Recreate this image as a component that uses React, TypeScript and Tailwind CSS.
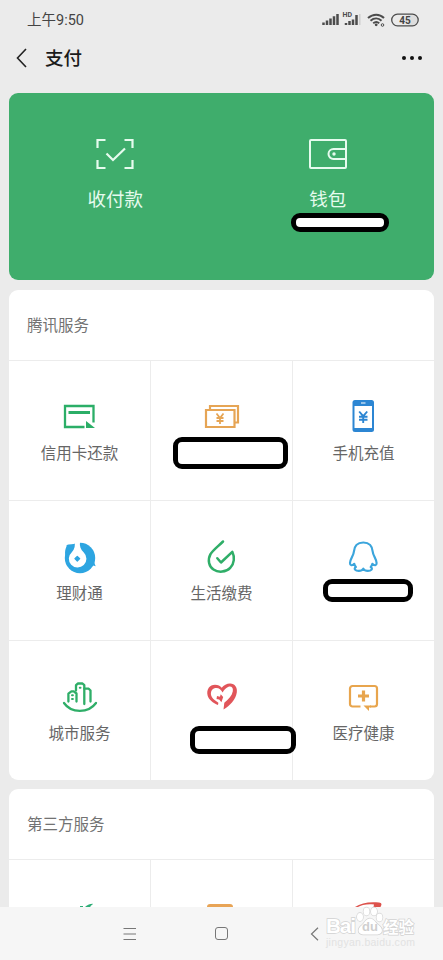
import { ReactNode } from "react"
import { clsx } from "clsx"

interface Service {
  label?: string
  icon: ReactNode
  // position of the marker that covers the hidden label
  mask?: string
}

function CreditCardIcon() {
  return (
    <svg width="41" height="40" viewBox="0 0 41 40" fill="none" stroke="#2bae67" strokeWidth="2.300">
      <path d="M25.500 30H6V9h28.500v16.500" />
      <path d="M9.500 15.500H31" strokeWidth="3" />
      <path d="M27 24l9 7h-9z" fill="#2bae67" stroke="none" />
    </svg>
  )
}

function CashIcon() {
  return (
    <svg width="41" height="40" viewBox="0 0 41 40" fill="none" stroke="#e6a555" strokeWidth="2.200">
      <path d="M9 12.500V9h28v16.500h-3" />
      <path d="M5 13h28.500v17H5z" />
      <path d="M15.500 16.500l3.500 4.500 3.500-4.500M19 20.500v6.500M15.500 21h7M15.500 24h7" strokeWidth="1.800" />
    </svg>
  )
}

function PhoneIcon() {
  return (
    <svg width="41" height="40" viewBox="0 0 41 40" fill="none">
      <rect x="9.500" y="3" width="21.500" height="32" rx="2.500" fill="#2c86d3" />
      <path d="M11.500 9h17.500v22H11.500z" fill="#fff" />
      <path d="M18 6h4.500" stroke="#fff" strokeWidth="1.200" />
      <path d="M16.200 14.500l4 4.700 4-4.700M20.200 19v7M16 19.700h8.500M16 22.700h8.500" stroke="#2c86d3" strokeWidth="1.900" />
    </svg>
  )
}

function FundIcon() {
  return (
    <svg width="41" height="40" viewBox="0 0 41 40">
      <circle cx="21" cy="21" r="15.200" fill="#2da5e1" />
      <path d="M6.300 18C5.600 14.500 6.500 11.500 7.500 9.500 7 8.500 8 7.500 9.500 7.500l6-.5L13 16z" fill="#2da5e1" />
      <path d="M34 20c.7 3.500 1.500 6.500 2.700 9.300l-4-1.300z" fill="#2da5e1" />
      {/* white drop with the coin in it */}
      <path d="M15.300 4c1.200 4.500.5 8-2.500 11.200a8.800 8.800 0 1012 .3C21.700 12.500 20.300 9.500 21 5z" fill="#fff" />
      <path d="M18.300 19.300l2.400 2.400-2.400 2.400-2.400-2.400z" fill="#2da5e1" stroke="#2da5e1" strokeWidth="1.200" strokeLinejoin="round" />
    </svg>
  )
}

function BillIcon() {
  return (
    <svg width="41" height="40" viewBox="0 0 41 40" fill="none" stroke="#2fae68" strokeWidth="2.500" strokeLinecap="round" strokeLinejoin="round">
      <path d="M22 4.500C17 9.500 12 13 9.500 17.200 6.300 23 8 29.500 12.500 32.500c5 3.500 12.500 2.700 16.700-1.700C33.500 26.500 33.800 20 31.300 14.800L20 25.500l-3.700-4.300" />
    </svg>
  )
}

function PenguinIcon() {
  return (
    <svg width="41" height="40" viewBox="0 0 41 40" fill="none" stroke="#3ba5dc" strokeWidth="2.200" strokeLinecap="round" strokeLinejoin="round">
      <path d="M20.300 5.500C14.300 5.500 11.200 9.500 10.800 15c-.2 3.500-3.600 7-3.800 11 0 2.800 1.800 2.900 4.200.8.300 1.300.8 2.300 1.700 3.200-2.600 1.700-.6 3.900 2.900 3.900 2.100 0 3.700-.8 4.500-2.200.8 1.400 2.400 2.200 4.500 2.200 3.500 0 5.500-2.200 2.900-3.900.9-.9 1.400-1.900 1.700-3.200 2.400 2.100 4.200 2 4.200-.8-.2-4-3.600-7.500-3.800-11-.4-5.500-3.500-9.500-9.500-9.500z" />
    </svg>
  )
}

function CityIcon() {
  return (
    <svg width="41" height="40" viewBox="0 0 41 40" fill="none" stroke="#2fae68" strokeWidth="2.300" strokeLinecap="round" strokeLinejoin="round">
      <path d="M5 26c7.200 10.500 24.400 10.500 32 0" />
      <path d="M9.400 24.500v-7.800l3-2.400h2.400l2.700 2.200v8" />
      <path d="M17 13.500V8.200l2-1.700h4.500l1.800 1.700V27" />
      <path d="M25.300 11.700h4.400l1.800 1.800v11" />
      <path d="M13 18.300h.9M13 22h.9M20.800 10.700h.7" strokeWidth="2" />
    </svg>
  )
}

function HeartIcon() {
  return (
    <svg width="41" height="40" viewBox="0 0 41 40" fill="#e1555a">
      <path d="M22.500 32.500l.8-6.800c4.500-3.600 7.700-7 8.500-11.500.6-3.700-1.500-5.200-4.300-4.400-2.500.9-4.300 3-5.900 5.800-1.500-3.500-4.500-5.200-7.400-4.500-4 1-5.500 5.500-3.200 9.200 1.300 2 3.500 3.500 6.400 5.500l-.4 2.300c-5-2.200-9.300-5.400-10.400-9.600C5.100 12.500 8.700 7.800 14 7.800c3 0 5.300 1.200 6.700 3 2.100-2.500 5.200-4.300 8.500-4.200 4.700.2 7.400 4 6.600 8.900-1.200 7.200-6.700 13-13.300 17z" />
      <path d="M16 19l3 .7.700-2.500 2.500 2.800-1.800 5.300-2.200-2.800-2.700-.5z" />
    </svg>
  )
}

function MedicalIcon() {
  return (
    <svg width="41" height="40" viewBox="0 0 41 40" fill="none" stroke="#e8a54d" strokeWidth="2.200">
      <path d="M17.500 29.500h-8a2.500 2.500 0 01-2.500-2.500V11.500A2.500 2.500 0 019.500 9h22a2.500 2.500 0 012.500 2.500V27a2.500 2.500 0 01-2.500 2.500H27" />
      <path d="M20.500 13.500v11M15 19h11" strokeWidth="3.200" />
      <path d="M20.500 28.400h7.500v2.200h-2v3.400z" fill="#e8a54d" stroke="none" />
    </svg>
  )
}

const services: Service[] = [
  { label: "信用卡还款", icon: <CreditCardIcon /> },
  { icon: <CashIcon />, mask: "left-[22px] top-[76px] h-8 w-[115px]" },
  { label: "手机充值", icon: <PhoneIcon /> },
  { label: "理财通", icon: <FundIcon /> },
  { label: "生活缴费", icon: <BillIcon /> },
  { icon: <PenguinIcon />, mask: "left-[30px] top-[78px] h-[23px] w-[90px]" },
  { label: "城市服务", icon: <CityIcon /> },
  { icon: <HeartIcon />, mask: "left-[39px] top-[85px] h-7 w-[106px]" },
  { label: "医疗健康", icon: <MedicalIcon /> },
]

function StatusBar() {
  return (
    <div className="flex h-[38px] items-center justify-between pr-[24px] pl-[27px] text-[#444]">
      <span className="pt-[4px] text-[14.500px] leading-none">上午9:50</span>
      <div className="flex items-center pt-px">
        <svg width="98" height="20" viewBox="0 0 98 20" fill="none" stroke="#4c4c4c">
          <path d="M2.500 15v-2.500M6 15v-4.500M9.500 15V8.500M13 15V6.200M16.500 15V4" strokeWidth="2.500" />
          <path d="M25 15v-2M28.500 15v-4M32 15V9.500M35.500 15V5" strokeWidth="2.500" />
          <path d="M38.800 15V4" stroke="#cfcfcf" strokeWidth="1.500" />
          <text x="21.500" y="7" fill="#4c4c4c" stroke="none" fontSize="7" fontWeight="700">HD</text>
          <path d="M47 8c5-4.500 11.500-4.500 16 0M49.500 10.800c3.500-3 8-3 11 0M52.200 13.300c2-1.600 4.200-1.600 6 0" strokeWidth="2" />
          <circle cx="55.200" cy="14.800" r="1.400" fill="#4c4c4c" stroke="none" />
          <circle cx="61.500" cy="15" r="1.300" strokeWidth="1" />
          <path d="M87 5h4a5.300 5.300 0 010 10.600h-4z" fill="#ddd" stroke="none" />
          <rect x="70.700" y="4.200" width="26.500" height="11.600" rx="5.800" strokeWidth="1.300" />
          <text x="84" y="13.600" fill="#444" stroke="none" fontSize="10" fontWeight="700" textAnchor="middle">45</text>
        </svg>
      </div>
    </div>
  )
}

function Mask({ className }: { className: string }) {
  return <div className={clsx("absolute z-10 rounded-[9px] border-[5px] border-black bg-white", className)} />
}

function SectionTitle({ children }: { children: ReactNode }) {
  return (
    <h2 className="flex h-[71px] items-center border-b border-[#ececec] pt-[3px] pl-[18px] text-[15.500px] text-[#727272]">
      {children}
    </h2>
  )
}

function PawWatermark() {
  return (
    <div className="absolute -top-[2px] left-[325px] h-[50px] w-[100px]">
      <svg width="100" height="50" viewBox="0 -4 100 50" fill="#fff" stroke="#d2d2d2" strokeWidth="1.400" paintOrder="stroke" className="font-['Liberation_Sans','Noto_Sans_CJK_SC',sans-serif]">
        <text x="1" y="24" fontSize="21" fontWeight="700" textLength="30">Bai</text>
        <path d="M45 9.500c-4 0-5 4-8 6.500-5 3.500-4.500 9 1 9.500h14.500c5.500-.5 6-6 1-9.500-3.500-2.500-4.500-6.500-8.500-6.500z" />
        <ellipse cx="35" cy="8" rx="3" ry="4" />
        <ellipse cx="41.500" cy="2.500" rx="3" ry="4" />
        <ellipse cx="49" cy="2.500" rx="3" ry="4" />
        <ellipse cx="54.500" cy="8.500" rx="3" ry="4" />
        <text x="37" y="22" fontSize="13" fontWeight="700" fill="#cfcfcf" stroke="none">du</text>
        <text x="58" y="24" fontSize="15.500" fontWeight="700">经验</text>
        <text x="1" y="37" fontSize="10.500" fill="#e2e2e2" stroke="none" textLength="89">jingyan.baidu.com</text>
      </svg>
    </div>
  )
}

export default function App() {
  return (
    <div className="flex h-[960px] w-[443px] flex-col overflow-hidden bg-[#ebebeb] font-[Roboto,'Noto_Sans_CJK_SC',sans-serif]">
      <StatusBar />

      <header className="flex h-[55px] shrink-0 items-start justify-between pr-[21px] pl-[16px]">
        <div className="flex h-10 items-center">
          <svg width="12" height="20" viewBox="0 0 12 20" fill="none" stroke="#222" strokeWidth="1.600">
            <path d="M10 1L1.500 10l8.500 9" />
          </svg>
          <h1 className="ml-[17px] pt-[2px] text-[18.500px] leading-none font-medium text-[#1b1b1b]">支付</h1>
        </div>
        <div className="flex h-10 items-center gap-[4px]">
          <span className="size-[4px] rounded-full bg-[#111]" />
          <span className="size-[4px] rounded-full bg-[#111]" />
          <span className="size-[4px] rounded-full bg-[#111]" />
        </div>
      </header>

      <main className="flex min-h-0 flex-1 flex-col px-[9px]">
        <section className="relative grid h-[187px] shrink-0 grid-cols-2 rounded-[9px] bg-[#3fad6c] pt-[45px] text-[18.500px] text-[#e6fbee]">
          <div className="flex flex-col items-center gap-[19px]">
            <svg width="38" height="32" viewBox="0 0 38 32" fill="none" stroke="#e6fbee" strokeWidth="2.200">
              <path d="M1.500 10V2h8M28.500 2h8v8M36.500 22v8h-8M9.500 30h-8v-8" />
              <path d="M10.500 15.500l6.500 6.500L29 10.500" />
            </svg>
            <span className="leading-[22px]">收付款</span>
          </div>
          <div className="flex flex-col items-center gap-[19px]">
            <svg width="38" height="32" viewBox="0 0 38 32" fill="none" stroke="#e6fbee" strokeWidth="2">
              <rect x="1" y="2" width="36" height="28" rx="1" />
              <path d="M37 11H24.500a5 5 0 000 10H37" />
              <circle cx="25" cy="16" r="1.700" fill="#e6fbee" stroke="none" />
            </svg>
            <span className="leading-[22px]">钱包</span>
          </div>
          <Mask className="top-[120px] left-[282px] h-[19px] w-[98px]" />
        </section>

        <section className="mt-[10px] h-[490px] shrink-0 overflow-hidden rounded-[9px] bg-white">
          <SectionTitle>腾讯服务</SectionTitle>
          <div className="grid grid-cols-[142px_142px_141px]">
            {services.map((service, index) => (
              <div
                key={index}
                className={clsx(
                  "relative flex h-[140px] flex-col items-center pt-[36px] text-[15.500px] text-[#666]",
                  index % 3 < 2 && "border-r border-[#ececec]",
                  index < 6 && "border-b border-b-[#ececec]"
                )}
              >
                {service.icon}
                {service.label && <span className="mt-[6px] leading-[22px]">{service.label}</span>}
                {service.mask && <Mask className={service.mask} />}
              </div>
            ))}
          </div>
        </section>

        <section className="mt-[9px] h-[118px] shrink-0 overflow-hidden rounded-t-[9px] bg-white">
          <SectionTitle>第三方服务</SectionTitle>
          <div className="grid h-[47px] grid-cols-[142px_142px_141px] items-end">
            <div className="flex h-full items-end justify-center border-r border-[#ececec]">
              <svg width="41" height="5" viewBox="0 0 41 5" fill="#2fae78">
                <path d="M26 5c2-2 4-3 8-3.200-.8 1.500-2.300 1.700-2.800 3.200zM21 4h3v1h-3z" />
              </svg>
            </div>
            <div className="flex h-full items-end justify-center border-r border-[#ececec]">
              <div className="mr-[4px] h-[3px] w-[26px] rounded-t-sm bg-[#e8a456]" />
            </div>
            <div className="flex h-full items-end justify-center">
              <svg width="41" height="6" viewBox="0 0 41 6" fill="#dd524c">
                <path d="M12 6C18 2 26 .5 36 1.500c3 .5 3 2 1.500 4.500h-7l.5-2.500C25 2.500 18 4 15 6z" />
              </svg>
            </div>
          </div>
        </section>
      </main>

      <nav className="relative h-[53px] shrink-0 bg-[#f6f6f6] text-[#777]">
        <div className="flex h-full items-center pl-[123px]">
          <svg width="14" height="14" viewBox="0 0 14 14" fill="none" stroke="currentColor" strokeWidth="1.200">
            <path d="M.5 1.500h12.500M.5 7h12.500M.5 12.500h12.500" />
          </svg>
          <span className="ml-[78px] size-[13px] rounded-[3px] border-[1.500px] border-[#777]" />
          <svg className="ml-[82px]" width="10" height="14" viewBox="0 0 10 14" fill="none" stroke="currentColor" strokeWidth="1.200">
            <path d="M8 .8L1.500 7 8 13.200" />
          </svg>
        </div>
        <PawWatermark />
      </nav>
    </div>
  )
}
